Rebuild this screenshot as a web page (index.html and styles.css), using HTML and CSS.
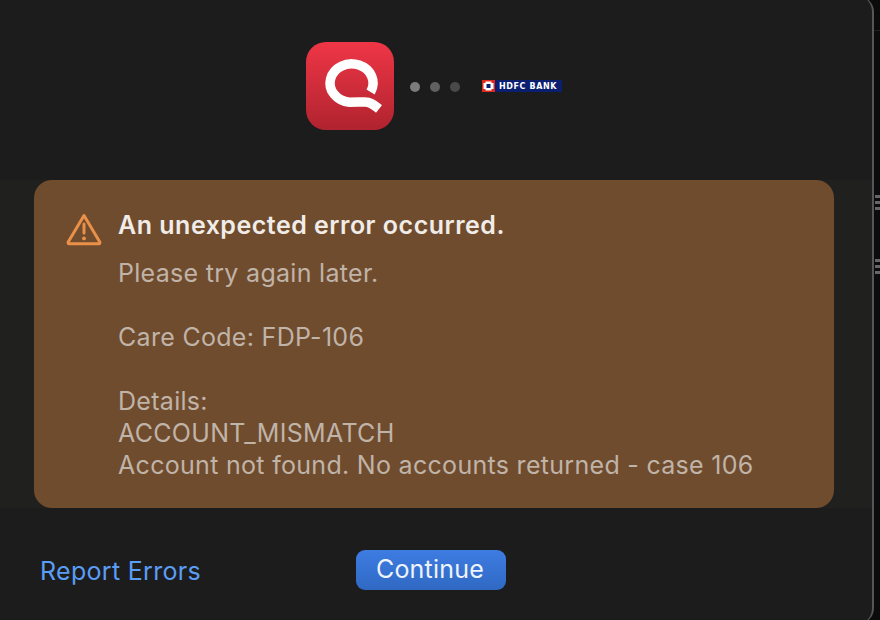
FILE: index.html
```html
<!DOCTYPE html>
<html lang="en">
<head>
  <meta charset="UTF-8">
  <title>Quicken - Error</title>
  <link rel="stylesheet" href="styles.css">
</head>
<body>

  <div class="dialog">
    <header class="logos">
      <svg class="app-icon" width="88" height="88" viewBox="0 0 88 88">
        <defs>
          <linearGradient id="red" x1="0" y1="0" x2="0" y2="1">
            <stop offset="0" stop-color="#ef3646"/>
            <stop offset="1" stop-color="#b0232f"/>
          </linearGradient>
        </defs>
        <rect width="88" height="88" rx="20" fill="url(#red)"/>
        <path d="M64.6 50A21.5 19.2 0 1 0 43.5 60.2C50 60.2 54 60 59 60C65 60 68 63 73 67" fill="none" stroke="#fff" stroke-width="9.5"/>
      </svg>
      <div class="dots">
        <span class="dot dot-1"></span>
        <span class="dot dot-2"></span>
        <span class="dot dot-3"></span>
      </div>
      <div class="bank">
        <svg width="13" height="12" viewBox="0 0 13 12">
          <rect width="13" height="12" fill="#e0281f"/>
          <path d="M3.5 1.5h6v1.5h2v6h-2v1.5h-6V9h-2V3h2z" fill="#fff"/>
          <rect x="4.5" y="4" width="4" height="4" fill="#0a1f70"/>
        </svg>
        <span class="bank-name">HDFC BANK</span>
      </div>
    </header>

    <section class="band">
      <div class="alert">
        <svg class="alert-icon" width="36" height="33" viewBox="0 0 36 33">
          <path d="M18 2.5L33.8 29a1.2 1.2 0 0 1-1 1.8H3.2a1.2 1.2 0 0 1-1-1.8z" fill="none" stroke="#ea9049" stroke-width="3" stroke-linejoin="round"/>
          <path d="M18 11v9" stroke="#ea9049" stroke-width="3" stroke-linecap="round"/>
          <circle cx="18" cy="25.4" r="1.9" fill="#ea9049"/>
        </svg>
        <div class="alert-text">
          <h1>An unexpected error occurred.</h1>
          <p>Please try again later.</p>
          <p>Care Code: FDP-106</p>
          <p>Details:<br>ACCOUNT_MISMATCH<br>Account not found. No accounts returned - case 106</p>
        </div>
      </div>
    </section>

    <footer class="actions">
      <a class="report" href="#">Report Errors</a>
      <button class="continue">Continue</button>
    </footer>
  </div>

  <div class="side">
    <div class="side-rule"></div>
    <div class="side-marks">
      <span></span>
      <span></span>
      <span></span>
    </div>
    <div class="side-marks">
      <span></span>
      <span></span>
      <span></span>
    </div>
  </div>

</body>
</html>
```
FILE: styles.css
```css
html, body {
  height: 100%;
  margin: 0;
}

body {
  background-color: #0b0b0b;
  font-family: Inter, "Noto Sans", sans-serif;
  overflow: hidden;
  display: flex;
  align-items: flex-start;
}

.dialog {
  width: 874px;
  height: 628px;
  margin-top: -4px;
  flex-shrink: 0;
  box-sizing: border-box;
  background-color: #1c1c1c;
  border-right: 2px solid #55565a;
  border-radius: 0 16px 16px 0;
  display: flex;
  flex-direction: column;
}

.logos {
  height: 184px;
  box-sizing: border-box;
  padding: 46px 0 0 306px;
  display: flex;
  align-items: flex-start;
}

.dots {
  display: flex;
  gap: 10px;
  margin: 40px 0 0 16px;
}

.dot {
  width: 10px;
  height: 10px;
  border-radius: 50%;
}

.dot-1 {
  background-color: #7c7c7c;
}

.dot-2 {
  background-color: #606060;
}

.dot-3 {
  background-color: #494949;
}

.bank {
  width: 80px;
  height: 12px;
  margin: 38px 0 0 22px;
  background-color: #0a1f70;
  display: flex;
  align-items: center;
}

.bank-name {
  margin-left: 4px;
  color: #fff;
  font-family: "DejaVu Sans", sans-serif;
  font-size: 8px;
  font-weight: 700;
  letter-spacing: 0.6px;
  white-space: nowrap;
}

.band {
  height: 328px;
  padding-left: 34px;
  background-color: #20201f;
}

.alert {
  width: 800px;
  height: 328px;
  box-sizing: border-box;
  padding: 29px 0 0 32px;
  background-color: #6f4c2e;
  border-radius: 18px;
  display: flex;
  gap: 16px;
}

.alert-icon {
  margin-top: 4px;
}

.alert-text h1 {
  margin: 0 0 16px;
  color: #f1ece8;
  font-size: 25px;
  font-weight: 600;
  line-height: 32px;
  letter-spacing: 0.5px;
}

.alert-text p {
  margin: 0 0 32px;
  color: #c0b3a8;
  font-size: 25px;
  line-height: 32px;
  letter-spacing: 0.3px;
}

.actions {
  flex: 1;
  padding: 42px 0 0 40px;
  display: flex;
  align-items: flex-start;
}

.report {
  margin-top: 5px;
  color: #5b9cf5;
  font-size: 25px;
  line-height: 32px;
  letter-spacing: 0.3px;
  text-decoration: none;
}

.continue {
  width: 150px;
  height: 40px;
  margin-left: 155px;
  padding: 0 2px 3px 0;
  color: #eef3fc;
  background: linear-gradient(#3e7ce2, #2f69c3);
  border: none;
  border-radius: 9px;
  font-family: inherit;
  font-size: 25px;
  letter-spacing: 0.2px;
}

.side {
  flex: 1;
  padding-left: 1px;
}

.side-rule {
  height: 1px;
  margin: 30px 0 164px -1px;
  background-color: #202020;
}

.side-marks {
  display: flex;
  flex-direction: column;
  gap: 3px;
  margin-bottom: 49px;
}

.side-marks span {
  height: 3px;
  background-color: #666;
}
```
